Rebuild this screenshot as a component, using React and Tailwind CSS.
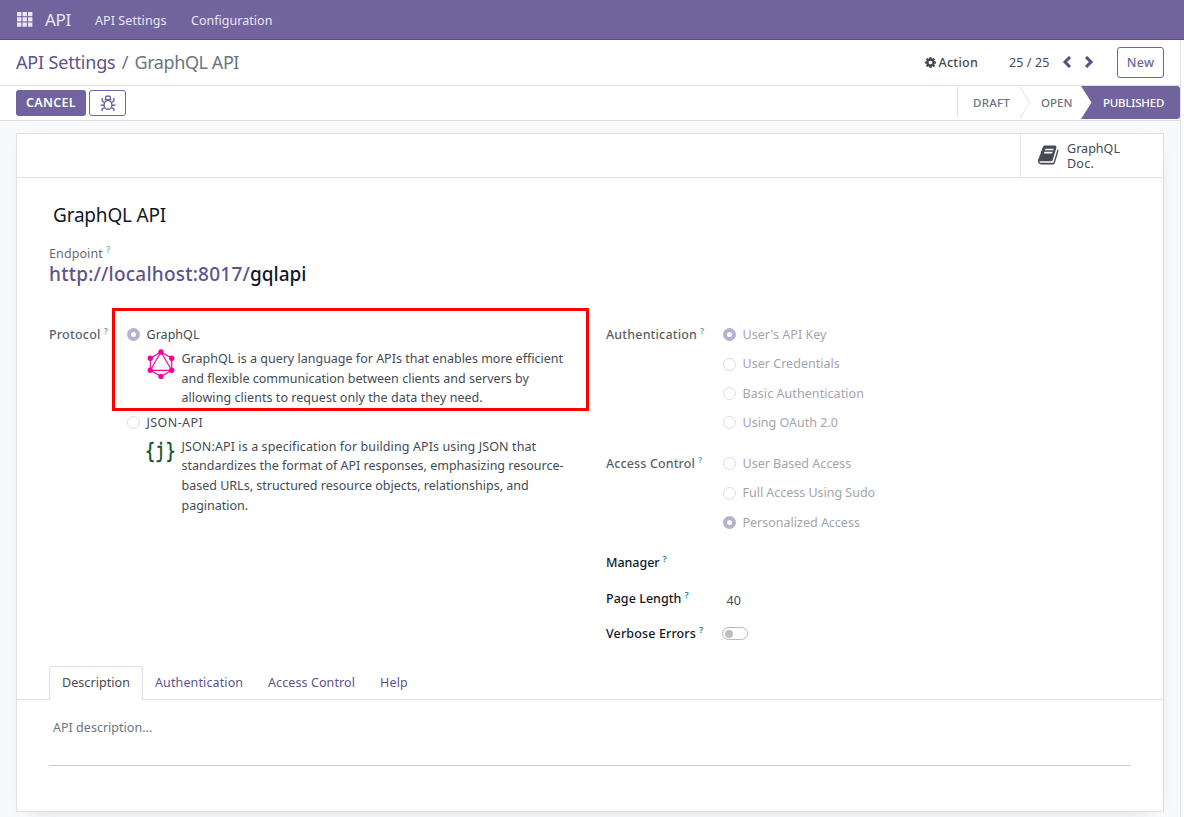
const BOOK =
  "M1639 478q40 57 18 129l-275 906q-19 64-76.5 107.5t-122.5 43.5h-923q-77 0-148.5-53.5t-99.5-131.5q-24-67-2-127 0-4 3-27t4-37q1-8-3-21.5t-3-19.5q2-11 8-21t16.5-23.5 16.5-23.5q23-38 45-91.5t30-91.5q3-10 .5-30t-.5-28q3-11 17-28t17-23q21-36 42-92t25-90q1-9-2.5-32t.5-28q4-13 22-30.5t22-22.5q19-26 42.5-84.5t27.5-96.5q1-8-3-25.5t-2-26.5q2-8 9-18t18-23 17-21q8-12 16.5-30.5t15-35 16-36 19.5-32 26.5-23.5 36-11.5 47.5 5.5l-1 3q38-9 51-9h761q74 0 114 56t18 130l-274 906q-36 119-71.5 153.5t-128.5 34.5h-869q-27 0-38 15-11 16-1 43 24 70 144 70h923q29 0 56-15.5t35-41.5l300-987q7-22 5-57 38 15 59 43zm-1064 2q-4 13 2 22.5t20 9.5h608q13 0 25.5-9.5t16.5-22.5l21-64q4-13-2-22.5t-20-9.5h-608q-13 0-25.5 9.5t-16.5 22.5zm-83 256q-4 13 2 22.5t20 9.5h608q13 0 25.5-9.5t16.5-22.5l21-64q4-13-2-22.5t-20-9.5h-608q-13 0-25.5 9.5t-16.5 22.5z";
const COG =
  "M1152 896q0-106-75-181t-181-75-181 75-75 181 75 181 181 75 181-75 75-181zm512-109v222q0 12-8 23t-20 13l-185 28q-19 54-39 91 35 50 107 138 10 12 10 25t-9 23q-27 37-99 108t-94 71q-12 0-26-9l-138-108q-44 23-91 38-16 136-29 186-7 28-36 28h-222q-14 0-24.5-8.5t-11.5-21.5l-28-184q-49-16-90-37l-141 107q-10 9-25 9-14 0-25-11-126-114-165-168-7-10-7-23 0-12 8-23 15-21 51-66.5t54-70.5q-27-50-41-99l-183-27q-13-2-21-12.5t-8-23.5v-222q0-12 8-23t19-13l186-28q14-46 39-92-40-57-107-138-10-12-10-24 0-10 9-23 26-36 98.5-107.5t94.5-71.5q13 0 26 10l138 107q44-23 91-38 16-136 29-186 7-28 36-28h222q14 0 24.5 8.5t11.5 21.5l28 184q49 16 90 37l142-107q9-9 24-9 13 0 25 10 129 119 165 170 7 8 7 22 0 12-8 23-15 21-51 66.5t-54 70.5q26 50 41 98l183 28q13 2 21 12.5t8 23.5z";

function AppsIcon() {
  return (
    <svg className="mr-[12px] h-[15px] w-[16px]" viewBox="0 0 16 15" fill="#e9e6f1">
      {[0, 5.5, 11].map((x) => [0, 5.25, 10.5].map((y) => <rect key={`${x}-${y}`} x={x} y={y} width="4.4" height="4.2" />))}
    </svg>
  );
}

function BugIcon() {
  return (
    <svg className="h-4 w-4" viewBox="0 0 16 16" fill="none" stroke="#71639e" strokeWidth="1.4">
      <ellipse cx="8" cy="9.9" rx="3.9" ry="4.4" />
      <path d="M4.6 4.6h6.8M5.7 4.4V2.6q0-1.6 2.3-1.6t2.3 1.6v1.8" />
      <path d="M4.6 7.6 2.2 6V3M11.4 7.6 13.8 6V3M4 10.2H.6M12 10.2h3.4M4.7 12.6 2.2 13.6V16M11.3 12.6l2.5 1V16" />
    </svg>
  );
}

function Chevron({ d }) {
  return (
    <svg className="-mt-[2px] h-3 w-[10px]" viewBox="0 0 10 12" fill="none" stroke="#5c4f87" strokeWidth="3">
      <path d={d} />
    </svg>
  );
}

function GraphQLLogo() {
  const nodes = [[14, 3], [24.7, 9.2], [24.7, 21.3], [14, 27.4], [3.3, 21.3], [3.3, 9.2]];
  return (
    <svg className="h-[30px] w-7" viewBox="0 0 28 30" fill="none" stroke="#f6009b" strokeWidth="1.2">
      <path d="M14 3 24.7 9.2V21.3L14 27.4 3.3 21.3V9.2Z" />
      <path d="M14 3 24.7 21.3H3.3Z" />
      {nodes.map(([x, y]) => <circle key={`${x}-${y}`} cx={x} cy={y} r="2.7" fill="#f6009b" stroke="none" />)}
    </svg>
  );
}

function Radio({ on }) {
  return on ? (
    <span className="h-[13px] w-[13px] shrink-0 rounded-full border-[4px] border-[#b8b1ce] bg-white" />
  ) : (
    <span className="h-[13px] w-[13px] shrink-0 rounded-full border border-[#dcdcdc] bg-white" />
  );
}

function Label({ children, muted, className }) {
  return (
    <div className={`flex h-[21px] shrink-0 items-center font-medium ${muted ? "text-[#111827] opacity-70" : "text-[#111827]"} ${className}`}>
      {children}
      <sup className="top-[-5px] ml-[3px] text-[9px] leading-none font-semibold tracking-normal text-[#017e97]">?</sup>
    </div>
  );
}

function Option({ on, text, className }) {
  return (
    <div className="flex h-[29.4px] items-start">
      <div className="flex h-[19.5px] items-center gap-[6.5px] text-[#a3a6aa]">
        <Radio on={on} />
        <span className={`pt-[1.4px] ${className}`}>{text}</span>
      </div>
    </div>
  );
}

function Protocol({ on, name, nameClass, logo, lines }) {
  return (
    <div>
      <div className="flex h-[19.5px] items-center gap-[6.5px]">
        <Radio on={on} />
        <span className={`pt-[1.4px] ${nameClass}`}>{name}</span>
      </div>
      <div className="flex pt-[4.5px] pl-[20px]">
        <div className="w-[34.5px] shrink-0">{logo}</div>
        <div className="leading-[19.6px] whitespace-nowrap">
          {lines.map(([t, c]) => <p key={t} className={c}>{t}</p>)}
        </div>
      </div>
    </div>
  );
}

export default function App() {
  return (
    <div className="flex h-[817px] w-[1184px] flex-col overflow-hidden bg-white font-['Noto_Sans',sans-serif] text-[12.5px] text-[#444b53]">
      <nav className="flex h-10 shrink-0 items-center border-b border-[#5a4f7f] bg-[#71639e] pl-[17px] text-[#e9e6f1]">
        <AppsIcon />
        <span className="w-[50px] pt-px text-[17px] tracking-[-0.3px]">API</span>
        <span className="w-[96px] pt-[3px] tracking-[0.08px]">API Settings</span>
        <span className="pt-[3px] tracking-[0.03px]">Configuration</span>
      </nav>

      <div className="flex min-h-0 flex-1">
        <main className="flex w-[1180px] shrink-0 flex-col">
          <header className="flex h-[46px] shrink-0 items-center border-b border-[#dee2e6] pr-4 pl-4">
            <div className="flex flex-1 items-center text-[18px] text-[#6c757d]">
              <span className="tracking-[-0.18px] text-[#5f5289]">API Settings</span>
              <span className="w-[19px] text-center">/</span>
              <span className="tracking-[-0.42px]">GraphQL API</span>
            </div>
            <div className="flex items-center gap-[2px] font-medium">
              <svg className="h-[13px] w-[13px]" viewBox="0 0 1792 1792" fill="#444b53"><path d={COG} /></svg>
              <span className="pt-[1.5px] tracking-[0.25px]">Action</span>
            </div>
            <span className="ml-[31px] pt-[1.5px] tracking-[0.107px]">25 / 25</span>
            <div className="mr-[23px] ml-[12.5px] flex gap-[12px]">
              <Chevron d="M8 1 3 6l5 5" />
              <Chevron d="m2 1 5 5-5 5" />
            </div>
            <button className="flex h-[31px] w-[47px] items-center justify-center rounded-[3px] border border-[#71639e] pt-[1.5px] font-medium tracking-[0.26px] text-[#71639e]">New</button>
          </header>

          <div className="flex h-[35px] shrink-0 justify-between border-b border-[#dee2e6] pl-4">
            <div className="flex gap-[3px] pt-[4px]">
              <button className="h-[26px] w-[70px] rounded-[3px] bg-[#71639e] font-semibold tracking-[0.32px] text-white">CANCEL</button>
              <button className="flex h-[26px] w-[37px] items-center justify-center rounded-[3px] border border-[#71639e]"><BugIcon /></button>
            </div>
            <div className="flex h-[33px] items-center rounded-l-[3px] border-l border-[#dee2e6] pl-[15px] text-[11.5px] font-medium text-[#6c757d]">
              <span className="w-[46px] tracking-[0.25px]">DRAFT</span>
              <svg className="h-[33px] w-[12px]" viewBox="0 0 12 33" fill="none" stroke="#dee2e6"><path d="M.5 0 10.5 16.5.5 33" /></svg>
              <span className="w-[50px] pl-[10px] tracking-[0.035px]">OPEN</span>
              <div className="flex h-[33px] items-center rounded-r-[3px] bg-[#71639e] pr-4 text-white">
                <svg className="mr-[11px] h-[33px] w-[11px]" viewBox="0 0 11 33" fill="#fff"><path d="M0 0 10.5 16.5 0 33Z" /></svg>
                <span className="w-[61px] tracking-[-0.2px]">PUBLISHED</span>
              </div>
            </div>
          </div>

          <div className="min-h-0 flex-1 overflow-hidden bg-[#f8f9fa] px-4 pt-3">
            <section className="flex h-[679px] flex-col border border-[#dee2e6] bg-white shadow-[0_5px_20px_-15px_rgba(0,0,0,0.4)]">
              <div className="flex h-[44px] shrink-0 justify-end border-b border-[#dee2e6]">
                <div className="flex w-[143px] items-center border-l border-[#dee2e6] pl-[17px]">
                  <svg className="-mt-[2px] mr-[7px] h-[22px] w-[22px]" viewBox="0 0 1792 1792" fill="#444b53"><path d={BOOK} /></svg>
                  <div className="leading-[15px]">
                    <p className="tracking-[0.036px]">GraphQL</p>
                    <p className="tracking-[0.24px]">Doc.</p>
                  </div>
                </div>
              </div>

              <div className="h-[488px] shrink-0 px-8 pt-[22px]">
                <h1 className="h-[30px] pl-1 text-[19px] leading-[30px] tracking-[-0.2px] text-[#111827]">GraphQL API</h1>
                <div className="mt-[14px] flex h-[19px] items-center text-[#111827] opacity-65">
                  <span className="pt-[1.5px] tracking-[0.1px]">Endpoint</span>
                  <sup className="top-[-4px] ml-[3px] text-[9px] leading-none font-medium text-[#0180a5]">?</sup>
                </div>
                <div className="h-[22px] text-[19px] leading-[22px] font-medium text-[#111827]">
                  <span className="tracking-[0.223px] text-[#5f5289]">http://localhost:8017/</span>
                  <span>gqlapi</span>
                </div>

                <div className="relative mt-[40px] flex">
                  <div className="absolute top-[-17px] left-[63px] h-[103px] w-[477px] border-[3px] border-[#fe0000]" />
                  <div className="flex w-[557px] shrink-0">
                    <Label muted className="w-[78px] tracking-[0.22px]">Protocol</Label>
                    <div className="flex flex-col gap-[5px]">
                      <Protocol
                        on
                        name="GraphQL"
                        nameClass="tracking-[0.036px]"
                        logo={<GraphQLLogo />}
                        lines={[
                          ["GraphQL is a query language for APIs that enables more efficient", ""],
                          ["and flexible communication between clients and servers by", "tracking-[0.015px]"],
                          ["allowing clients to request only the data they need.", "tracking-[0.05px]"],
                        ]}
                      />
                      <Protocol
                        name="JSON-API"
                        nameClass="tracking-[0.4px]"
                        logo={<div className="-ml-[2px] w-[40px] origin-left scale-x-77 pt-[2px] font-['DejaVu_Sans_Mono',monospace] text-[22px] leading-[24px] text-[#0b5226] [-webkit-text-stroke:0.4px_#0b5226]">{"{j}"}</div>}
                        lines={[
                          ["JSON:API is a specification for building APIs using JSON that", "tracking-[0.105px]"],
                          ["standardizes the format of API responses, emphasizing resource-", ""],
                          ["based URLs, structured resource objects, relationships, and", ""],
                          ["pagination.", "tracking-[-0.02px]"],
                        ]}
                      />
                    </div>
                  </div>

                  <div>
                    <div className="flex h-[129px]">
                      <Label muted className="w-[117px] tracking-[0.16px]">Authentication</Label>
                      <div>
                        <Option on text="User's API Key" className="tracking-[0.038px]" />
                        <Option text="User Credentials" className="tracking-[0.03px]" />
                        <Option text="Basic Authentication" className="tracking-[0.07px]" />
                        <Option text="Using OAuth 2.0" className="" />
                      </div>
                    </div>
                    <div className="flex h-[99px]">
                      <Label muted className="w-[117px] tracking-[0.12px]">Access Control</Label>
                      <div>
                        <Option text="User Based Access" className="" />
                        <Option text="Full Access Using Sudo" className="tracking-[-0.02px]" />
                        <Option on text="Personalized Access" className="" />
                      </div>
                    </div>
                    <div className="flex h-[36px]"><Label className="tracking-[-0.046px]">Manager</Label></div>
                    <div className="flex h-[35px]">
                      <Label className="w-[120.5px] tracking-[0.044px]">Page Length</Label>
                      <span className="pt-[2px] leading-[19.5px]">40</span>
                    </div>
                    <div className="flex h-[20px]">
                      <Label className="w-[116px] tracking-[0.137px]">Verbose Errors</Label>
                      <span className="mt-[3px] flex h-[13px] w-[26px] items-center rounded-full border border-[#b9b9b9] pl-[2px]">
                        <span className="h-[8px] w-[8px] rounded-full bg-[#bfbfbf]" />
                      </span>
                    </div>
                  </div>
                </div>
              </div>

              <div className="flex h-[34px] shrink-0 text-[#5f5289]">
                <div className="w-8 border-b border-[#dee2e6]" />
                <div className="flex w-[94px] items-center justify-center rounded-t-[3px] border border-b-0 border-[#dee2e6] tracking-[0.08px] text-[#444b53]">Description</div>
                <div className="flex flex-1 items-center border-b border-[#dee2e6] pt-[1.5px] pl-[12px]">
                  <span className="w-[113px] tracking-[0.12px]">Authentication</span>
                  <span className="w-[112px] tracking-[0.096px]">Access Control</span>
                  <span className="tracking-[0.19px]">Help</span>
                </div>
              </div>
              <div className="mx-8 h-[66px] shrink-0 border-b border-[#c9ccd0] pt-[18px] pl-1 leading-[20px] tracking-[0.02px] text-[#6c757d]">API description...</div>
            </section>
          </div>
        </main>
        <aside className="flex flex-1 flex-col border-l border-[#dee2e6]">
          <div className="h-[75px] border-b border-[#e9ebee]" />
          <div className="flex-1 bg-[#fcfcfd]" />
        </aside>
      </div>
    </div>
  );
}
